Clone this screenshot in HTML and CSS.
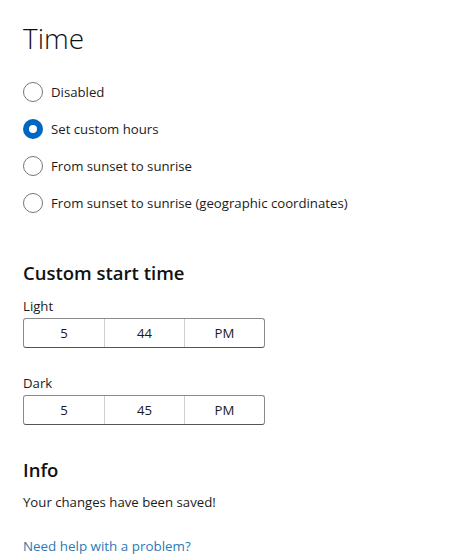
FILE: index.html
```html
<!DOCTYPE html>
<html>
<head>
<meta charset="utf-8">
<link rel="stylesheet" href="styles.css">
</head>
<body>
<div class="page">
  <h1 class="title">Time</h1>
  <div class="radios">
    <div class="radio"><span class="circle"></span><span class="label">Disabled</span></div>
    <div class="radio"><span class="circle checked"></span><span class="label">Set custom hours</span></div>
    <div class="radio"><span class="circle"></span><span class="label">From sunset to sunrise</span></div>
    <div class="radio"><span class="circle"></span><span class="label">From sunset to sunrise (geographic coordinates)</span></div>
  </div>
  <h2 class="section">Custom start time</h2>
  <div class="field-label">Light</div>
  <div class="timebox">
    <div class="seg">5</div>
    <div class="seg">44</div>
    <div class="seg">PM</div>
  </div>
  <div class="field-label dark">Dark</div>
  <div class="timebox">
    <div class="seg">5</div>
    <div class="seg">45</div>
    <div class="seg">PM</div>
  </div>
  <h2 class="section info">Info</h2>
  <p class="text">Your changes have been saved!</p>
  <a class="link" href="#">Need help with a problem?</a>
</div>
</body>
</html>
```
FILE: styles.css
```css
html, body {
  margin: 0;
  padding: 0;
  background: #ffffff;
}
body {
  font-family: "Open Sans", "Noto Sans", "Liberation Sans", sans-serif;
  color: #1a1a1a;
}
.page {
  padding: 18px 23px 0 23px;
  display: flex;
  flex-direction: column;
  align-items: flex-start;
}
.title {
  margin: 0;
  font-size: 28px;
  font-weight: 300;
  line-height: 40px;
  color: #111;
}
.radios {
  margin-top: 24px;
  display: flex;
  flex-direction: column;
  gap: 17px;
}
.radio {
  display: flex;
  align-items: center;
  height: 20px;
}
.circle {
  box-sizing: border-box;
  width: 20px;
  height: 20px;
  border-radius: 50%;
  border: 1px solid #777;
  margin-right: 8px;
  flex: none;
}
.circle.checked {
  border: 6px solid #0067c0;
  background: #fff;
}
.label {
  font-size: 13.2px;
  color: #1b1b1b;
}
.section {
  margin: 48px 0 0 0;
  font-size: 18.5px;
  font-weight: 600;
  line-height: 24px;
  color: #111;
}
.field-label {
  margin-top: 12px;
  font-size: 13.2px;
  line-height: 18px;
  color: #1b1b1b;
}
.field-label.dark {
  margin-top: 26px;
}
.timebox {
  margin-top: 3px;
  box-sizing: border-box;
  width: 242px;
  height: 30px;
  display: grid;
  grid-template-columns: 1fr 1fr 1fr;
  border: 1px solid #8a8a8a;
  border-bottom-color: #555;
  border-radius: 3px;
}
.seg {
  display: flex;
  align-items: center;
  justify-content: center;
  font-size: 13.2px;
  color: #1b1b1b;
}
.seg + .seg {
  border-left: 1px solid #cfcfcf;
}
.section.info {
  margin-top: 33px;
}
.text {
  margin: 11px 0 0 0;
  font-size: 13.2px;
  line-height: 18px;
  color: #1b1b1b;
}
.link {
  margin-top: 26px;
  font-size: 13.4px;
  line-height: 18px;
  color: #2b7bb5;
  text-decoration: none;
}
```
